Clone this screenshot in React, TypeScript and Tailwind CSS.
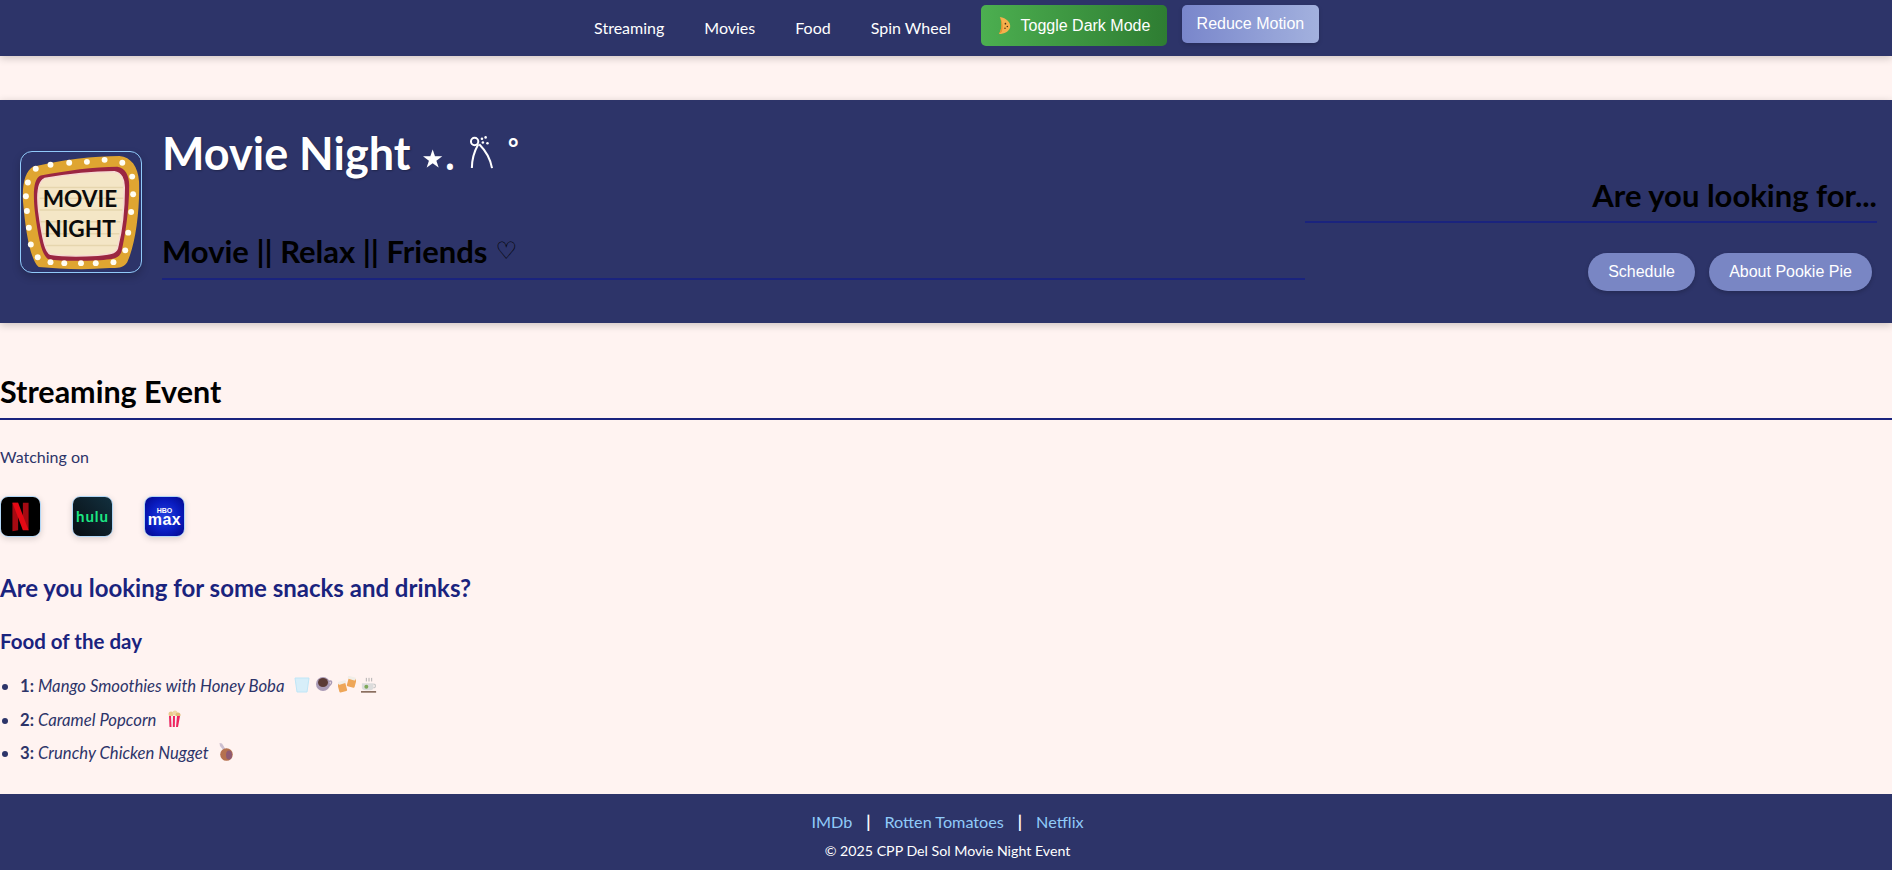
const uiFont = "font-['Lato','Noto_Sans',sans-serif]";

function Banana() {
  return (
    <svg viewBox="0 0 16 20" className="w-[15px] h-[19px] mr-[8px]">
      <path d="M3 1 C10 2 15 7 14 12 C13 16 8 19 2 19 C5 15 6 7 3 1 Z" fill="#f5b14c" />
      <path d="M3 1 C6 6 7 12 5 17 L2 19 C5 15 6 7 3 1 Z" fill="#e8902c" />
      <circle cx="9" cy="8" r="0.9" fill="#4a2d10" />
      <circle cx="11" cy="11" r="0.8" fill="#4a2d10" />
      <circle cx="8.500" cy="13" r="0.8" fill="#4a2d10" />
    </svg>
  );
}

function Bow() {
  return (
    <svg viewBox="0 0 27 36" className="w-[27px] h-[33px]" fill="none" stroke="white" strokeWidth="2.200">
      <circle cx="6" cy="6" r="4" />
      <path d="M10 9 C6 16 3 24 3 35" />
      <path d="M11 9 C17 15 23 24 25 35" />
      <circle cx="14" cy="3" r="1.400" fill="white" stroke="none" />
      <circle cx="18" cy="1.500" r="1.400" fill="white" stroke="none" />
      <circle cx="15" cy="7" r="1.400" fill="white" stroke="none" />
      <circle cx="20" cy="8" r="1.400" fill="white" stroke="none" />
    </svg>
  );
}

function MarqueeLogo() {
  const bulbs = [
    [15, 17], [30, 13], [49, 11], [67, 10], [85, 8], [103, 11], [113, 25], [114, 43], [112, 61], [109, 82],
    [106, 100], [94, 112], [76, 113], [61, 113], [44, 113], [30, 112], [17, 107], [10, 94], [8, 77], [6, 60], [5, 45], [7, 31],
  ];
  return (
    <svg viewBox="0 0 122 122" className="w-full h-full">
      <path d="M12 15 C40 8 75 4 100 4 C112 5 119 15 120 30 C121 60 116 95 108 112 C104 118 98 118 90 118 C65 120 40 119 18 117 C10 110 5 85 2 50 C1 30 5 20 12 15 Z" fill="#dfa531" />
      <path d="M20 24 C45 19 75 15 98 15 C106 16 110 24 110 34 C110 58 106 85 102 102 C99 109 92 109 80 110 C60 111 40 111 28 109 C22 106 18 92 14 60 C12 40 13 27 20 24 Z" fill="#9b2641" />
      <path d="M24 27 C46 23 74 20 95 20 C102 21 105 28 105 36 C105 58 102 82 98 98 C96 103 90 104 78 105 C60 106 42 106 30 104 C25 102 22 90 18 60 C16 42 17 30 24 27 Z" fill="#f4e6c6" stroke="#f6d9d3" strokeWidth="1.500" />
      <g stroke="#e6d6ae" strokeWidth="1.500">
        <path d="M19 36 H104" />
        <path d="M19 47 H104" />
        <path d="M19 59 H103" />
        <path d="M20 71 H101" />
        <path d="M22 83 H100" />
        <path d="M25 95 H98" />
      </g>
      <text x="60" y="56" textAnchor="middle" className="font-['Lato',sans-serif]" fontSize="23" fontWeight="700" fill="#0b0b0b">MOVIE</text>
      <text x="60" y="86" textAnchor="middle" className="font-['Lato',sans-serif]" fontSize="23" fontWeight="700" fill="#0b0b0b">NIGHT</text>
      {bulbs.map(([x, y], i) => (
        <circle key={i} cx={x} cy={y} r="3" fill="#fffdf2" />
      ))}
    </svg>
  );
}

function NetflixIcon() {
  return (
    <svg viewBox="0 0 41 41" className="w-full h-full">
      <rect width="41" height="41" fill="#000" />
      <path d="M12 6 H18 V35 L12 36 Z" fill="#a50a12" />
      <path d="M23 6 H29 V35 L23 34 Z" fill="#a50a12" />
      <path d="M12 6 H18 L29 35 L23 35 Z" fill="#e50914" />
    </svg>
  );
}

function HuluIcon() {
  return (
    <div className="w-full h-full flex items-center justify-center bg-gradient-to-tr from-[#070d12] to-[#12303f]">
      <span className="font-['Lato',sans-serif] text-[15px] leading-none font-bold text-[#1ce783] tracking-[1px]">hulu</span>
    </div>
  );
}

function MaxIcon() {
  return (
    <div className="w-full h-full flex flex-col items-center justify-center bg-[radial-gradient(circle,#2342e0_0%,#0a1cc0_55%,#02078a_100%)] text-white font-['Liberation_Sans',sans-serif] font-bold">
      <span className="text-[7px] leading-[6px]">HBO</span>
      <span className="text-[16px] leading-[12px] tracking-[0.5px]">max</span>
    </div>
  );
}

function StreamIcon({ children }: { children: React.ReactNode }) {
  return (
    <div className="w-[41px] h-[41px] rounded-lg overflow-hidden border border-[#90caf9]/70 shadow-[0_2px_6px_rgba(0,0,0,0.15)]">
      {children}
    </div>
  );
}

function Glass() {
  return (
    <svg viewBox="0 0 16 18" className="w-[16px] h-[18px]">
      <path d="M1 2 H15 L13 16 H3 Z" fill="#d7eef9" stroke="#bfe6f7" strokeWidth="1" />
    </svg>
  );
}

function Coffee() {
  return (
    <svg viewBox="0 0 18 16" className="w-[18px] h-[16px]">
      <path d="M13 6 C17 3 18 7 14 10" fill="none" stroke="#a99ab5" strokeWidth="1.500" />
      <circle cx="8" cy="8" r="7" fill="#a99ab5" />
      <ellipse cx="8" cy="6.500" rx="5" ry="4.500" fill="#5a3a35" />
    </svg>
  );
}

function Beers() {
  return (
    <svg viewBox="0 0 18 17" className="w-[18px] h-[17px]">
      <rect x="0.500" y="7" width="8" height="9" rx="1" fill="#eea658" transform="rotate(-15 4 12)" />
      <rect x="0.500" y="5" width="8" height="3" rx="1" fill="#f1eee8" transform="rotate(-15 4 8)" />
      <rect x="9.500" y="2" width="8" height="9" rx="1" fill="#eea658" transform="rotate(15 13 7)" />
      <rect x="9.500" y="0.500" width="8" height="3" rx="1" fill="#f1eee8" transform="rotate(15 13 3)" />
    </svg>
  );
}

function Tea() {
  return (
    <svg viewBox="0 0 18 18" className="w-[16px] h-[18px]">
      <path d="M6 1 V5 M9 1 V5 M12 1 V5" stroke="#a9a9a9" strokeWidth="1" />
      <path d="M1 7 H14 V12 C14 14 12 15 8 15 C4 15 1 14 1 12 Z" fill="#dcdcdc" />
      <path d="M14 8 C17 8 17 12 14 12" fill="none" stroke="#c9c9c9" strokeWidth="1.300" />
      <circle cx="6" cy="11" r="2.200" fill="#7ea85a" />
      <rect x="0" y="16" width="17" height="1.500" fill="#6b4a38" />
    </svg>
  );
}

function Popcorn() {
  return (
    <svg viewBox="0 0 16 18" className="w-[16px] h-[18px]">
      <circle cx="5" cy="4" r="2.500" fill="#e9c98c" />
      <circle cx="9" cy="3" r="2.500" fill="#f0d8a5" />
      <circle cx="12" cy="5" r="2.500" fill="#e2bb78" />
      <path d="M2 6 H15 L12 17 H3 Z" fill="#f4f4f4" />
      <path d="M3 6 H5 L5.500 17 H3.500 Z M7 6 H9 L8.800 17 H6.800 Z M11 6 H14 L12 17 H10 Z" fill="#f0245e" />
    </svg>
  );
}

function Drumstick() {
  return (
    <svg viewBox="0 0 14 18" className="w-[14px] h-[18px]">
      <path d="M0.500 0 L3 0.500 L7 7 L5 8 L1 3 Z" fill="#cdbfd0" />
      <ellipse cx="7.500" cy="11.500" rx="6.300" ry="6.300" fill="#b5714f" />
      <ellipse cx="10" cy="12" rx="3" ry="4.500" fill="#8f5a72" />
    </svg>
  );
}

export default function App() {
  return (
    <div className={`min-h-[870px] flex flex-col bg-[#fff3f1] text-[#2d3469] ${uiFont}`}>
      {/* Nav */}
      <nav className="h-[56px] bg-[#2d3469] shadow-[0_2px_8px_rgba(0,0,0,0.2)] flex justify-center items-start pl-[1px]">
        <div className="flex items-center h-[56px] text-[16px] text-white">
          <a className="px-5">Streaming</a>
          <a className="px-5">Movies</a>
          <a className="px-5">Food</a>
          <a className="px-5">Spin Wheel</a>
        </div>
        <button className="ml-[10px] mt-[5px] w-[186px] h-[41px] rounded-[5px] bg-gradient-to-r from-[#4caf50] to-[#2e7d32] text-white font-['Liberation_Sans',sans-serif] text-base flex items-center justify-center">
          <Banana />
          Toggle Dark Mode
        </button>
        <button className="ml-[15px] mt-[5px] w-[137px] h-[38px] rounded-[5px] bg-gradient-to-r from-[#7986cb] to-[#a3b1de] text-white font-['Liberation_Sans',sans-serif] text-base shadow-[0_2px_4px_rgba(0,0,0,0.15)]">
          Reduce Motion
        </button>
      </nav>

      {/* Header */}
      <header className="mt-[44px] h-[223px] bg-[#2d3469] shadow-[0_2px_8px_rgba(0,0,0,0.2)] flex">
        <div className="ml-5 mt-[51px] w-[122px] h-[122px] shrink-0 rounded-xl border border-[#90caf9] shadow-[0_4px_8px_rgba(0,0,0,0.2)] overflow-hidden">
          <MarqueeLogo />
        </div>
        <div className="ml-5 w-[1143px] shrink-0">
          <div className="mt-[26px] flex items-start h-[52px] text-white">
            <h1 className="text-[45px] leading-[54px] font-bold [text-shadow:1px_1px_2px_rgba(0,0,0,0.3)]">Movie Night</h1>
            <span className="ml-[7px] mt-[5px] text-[50px] leading-[50px] tracking-[-5px] font-['Noto_Sans',sans-serif]">⋆</span>
            <span className="mt-[1px] text-[48px] leading-[50px] font-['Noto_Sans',sans-serif]">.</span>
            <span className="ml-[12px] mt-[10px]"><Bow /></span>
            <span className="ml-[12px] mt-[8px] text-[40px] leading-[44px] font-['Noto_Sans',sans-serif]">˚</span>
          </div>
          <div className="mt-[51px] h-[51px] pb-[6px] border-b-2 border-[#1a237e] flex items-center text-black">
            <h2 className="text-[31px] leading-[42px] font-bold">Movie || Relax || Friends</h2>
            <span className="ml-2 text-[24px] leading-none font-bold font-['DejaVu_Sans',sans-serif]">♡</span>
          </div>
        </div>
        <div className="w-[572px] shrink-0">
          <div className="mt-[72px] h-[51px] border-b-2 border-[#1a237e] text-right">
            <h2 className="text-[31px] leading-[46px] font-bold text-black">Are you looking for...</h2>
          </div>
          <div className="mt-[30px] flex justify-end gap-[14px] pr-[5px] font-['Liberation_Sans',sans-serif] text-base text-white">
            <button className="h-[38px] w-[107px] rounded-[20px] bg-[#7986c4] shadow-[0_2px_4px_rgba(0,0,0,0.2)]">Schedule</button>
            <button className="h-[38px] w-[163px] rounded-[20px] bg-[#7986c4] shadow-[0_2px_4px_rgba(0,0,0,0.2)]">About Pookie Pie</button>
          </div>
        </div>
      </header>

      {/* Main */}
      <main className="grow">
        <div className="mt-[49px] h-[48px] border-b-2 border-[#1a237e]">
          <h2 className="text-[30.500px] leading-[38px] font-bold text-black">Streaming Event</h2>
        </div>
        <p className="mt-[25px] text-[16px] leading-[24px]">Watching on</p>
        <div className="mt-[27px] flex gap-[31px]">
          <StreamIcon><NetflixIcon /></StreamIcon>
          <StreamIcon><HuluIcon /></StreamIcon>
          <StreamIcon><MaxIcon /></StreamIcon>
        </div>
        <h3 className="mt-[36px] text-[24px] leading-[30px] font-bold text-[#1a237e]">Are you looking for some snacks and drinks?</h3>
        <h4 className="mt-[26px] text-[20.500px] leading-[24px] font-bold text-[#1a237e]">Food of the day</h4>
        <ul className="mt-[21px] list-disc pl-5 text-[16.700px] leading-[24px] italic">
          <li className="h-[33.500px] flex items-start relative">
            <span className="absolute -left-[18px] top-[10px] w-[6px] h-[6px] rounded-full bg-[#2d3469]" />
            <b className="not-italic font-bold mr-1">1:</b> Mango Smoothies with Honey Boba
            <span className="ml-[10px] mt-[2px] flex gap-[5px]"><Glass /><Coffee /><Beers /><Tea /></span>
          </li>
          <li className="h-[33.500px] flex items-start relative">
            <span className="absolute -left-[18px] top-[10px] w-[6px] h-[6px] rounded-full bg-[#2d3469]" />
            <b className="not-italic font-bold mr-1">2:</b> Caramel Popcorn
            <span className="ml-[10px] mt-[2px]"><Popcorn /></span>
          </li>
          <li className="h-[33.500px] flex items-start relative">
            <span className="absolute -left-[18px] top-[10px] w-[6px] h-[6px] rounded-full bg-[#2d3469]" />
            <b className="not-italic font-bold mr-1">3:</b> Crunchy Chicken Nugget
            <span className="ml-[10px] mt-[2px]"><Drumstick /></span>
          </li>
        </ul>
      </main>

      {/* Footer */}
      <footer className="h-[76px] bg-[#2d3469] text-center text-white pl-[3px]">
        <div className="pt-[16px] text-[16.200px] leading-[24px] flex justify-center">
          <a className="text-[#90caf9]">IMDb</a>
          <span className="mx-[14px] font-bold">|</span>
          <a className="text-[#90caf9]">Rotten Tomatoes</a>
          <span className="mx-[14px] font-bold">|</span>
          <a className="text-[#90caf9]">Netflix</a>
        </div>
        <p className="mt-[7px] text-[14.200px] leading-[20px]">© 2025 CPP Del Sol Movie Night Event</p>
      </footer>
    </div>
  );
}
